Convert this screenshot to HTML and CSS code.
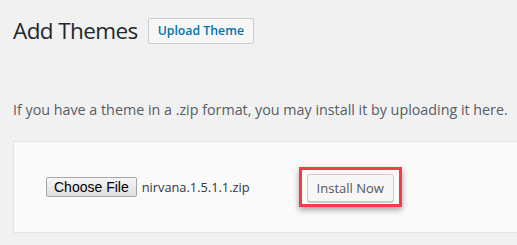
FILE: index.html
```html
<!DOCTYPE html>
<html lang="en">

<head>
    <meta charset="UTF-8">
    <meta name="viewport" content="width=device-width, initial-scale=1.0">
    <title>Add Themes</title>
    <link rel="stylesheet" href="styles.css">
</head>

<body>
    <div class="wrap">
        <div class="heading">
            <h1>Add Themes</h1>
            <a class="page-title-action" href="#">Upload Theme</a>
        </div>
        <p class="install-help">If you have a theme in a .zip format, you may install it by uploading it here.</p>
        <form class="upload-form">
            <span class="file-input">
                <button type="button" class="choose-file">Choose File</button>
                <span class="file-name">nirvana.1.5.1.1.zip</span>
            </span>
            <span class="highlight">
                <button type="button" class="install-btn">Install Now</button>
            </span>
        </form>
    </div>
</body>

</html>
```

FILE: styles.css
```css
* {
    margin: 0;
    padding: 0;
    box-sizing: border-box;
}

html {
    background: #f1f1f1;
}

body {
    font-family: "Open Sans", "Noto Sans", sans-serif;
    color: #444;
    overflow: hidden;
}

.wrap {
    padding: 18px 0 0 13px;
}

.heading {
    display: flex;
    align-items: center;
    gap: 10px;
}

h1 {
    font-size: 22.5px;
    font-weight: 400;
    letter-spacing: -0.6px;
    color: #23282d;
    line-height: 26px;
}

.page-title-action {
    display: inline-block;
    height: 26px;
    line-height: 24px;
    padding: 0 9px;
    border: 1px solid #ccc;
    border-radius: 2px;
    background: #f7f7f7;
    color: #0073aa;
    font-size: 12.3px;
    font-weight: 600;
    text-decoration: none;
}

.install-help {
    margin-top: 56px;
    font-size: 14.3px;
    line-height: 20px;
    color: #555d66;
}

.upload-form {
    display: flex;
    align-items: center;
    width: 540px;
    height: 92px;
    margin-top: 21px;
    padding-left: 32px;
    border: 1px solid #e5e5e5;
    background: #fafafa;
}

.file-input {
    display: flex;
    align-items: center;
    gap: 5px;
}

.choose-file {
    height: 20px;
    padding: 0 7px;
    font-family: "Liberation Sans", Arial, sans-serif;
    font-size: 14px;
    color: #000;
    background: linear-gradient(#f6f6f6, #dedede);
    border: 1px solid #a5a5a5;
    border-radius: 2px;
}

.file-name {
    font-size: 12.8px;
    color: #32373c;
}

.highlight {
    display: inline-block;
    margin-left: 49px;
    padding: 4px 5px 2px 5px;
    border: 3px solid #ef3e46;
    box-shadow: 0 3px 6px rgba(0, 0, 0, 0.35);
}

.install-btn {
    display: block;
    height: 28px;
    padding: 0 9px;
    font-family: "Open Sans", "Noto Sans", sans-serif;
    font-size: 13px;
    color: #555;
    background: #f7f7f7;
    border: 1px solid #ccc;
    border-radius: 3px;
    box-shadow: 0 1px 0 #ccc;
}
```
